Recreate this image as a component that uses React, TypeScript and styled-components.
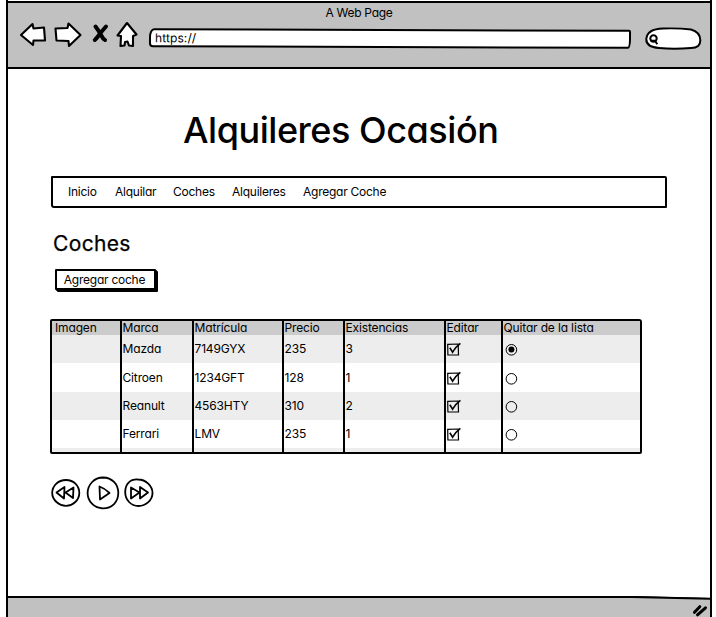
import React from 'react';
import styled, { createGlobalStyle } from 'styled-components';

const Global = createGlobalStyle`
  * { box-sizing: border-box; }
  body {
    margin: 0;
    background: #fff;
    color: #000;
    font-family: Inter, "Liberation Sans", sans-serif;
    font-feature-settings: "cv11" 1;
    overflow: hidden;
  }
`;

const Browser = styled.div`
  width: 706px;
  height: 617px;
  margin-left: 6px;
  border-left: 2px solid #000;
  border-right: 2px solid #000;
  display: flex;
  flex-direction: column;
`;

const Chrome = styled.header`
  height: 68px;
  flex: none;
  margin-top: 1px;
  background: #c1c1c1;
  border-top: 2px solid #000;
  border-bottom: 2px solid #000;
`;

const WindowTitle = styled.div`
  height: 20px;
  line-height: 20px;
  text-align: center;
  font-size: 12px;
  letter-spacing: -0.3px;
`;

const Tools = styled.div`
  display: flex;
  align-items: flex-start;
`;

const NavIcons = styled.svg`
  width: 142px;
  height: 36px;
  margin-top: -6px;
  flex: none;
  overflow: visible;
`;

const Address = styled.div`
  width: 482px;
  height: 19px;
  margin-top: 6px;
  margin-left: -1px;
  padding-left: 4px;
  background: #fff;
  border: 2px solid #000;
  border-radius: 5px 2px 3px 4px / 9px 2px 9px 4px;
  transform: rotate(0.2deg);
  font-size: 12px;
  line-height: 15px;
  letter-spacing: 0.1px;
`;

const Search = styled.svg`
  width: 58px;
  height: 24px;
  margin: 3px 0 0 14px;
  flex: none;
`;

const Page = styled.main`
  flex: 1;
  padding: 0 43px;
  display: flex;
  flex-direction: column;
  align-items: flex-start;
`;

const Title = styled.h1`
  margin: 37px 0 0 132px;
  font-size: 36px;
  line-height: 48px;
  font-weight: 500;
  letter-spacing: -0.46px;
  white-space: nowrap;
`;

const Menu = styled.nav`
  width: 616px;
  height: 32px;
  margin-top: 22px;
  padding-left: 15px;
  border: 2px solid #000;
  border-radius: 1px 2px 1px 3px;
  display: flex;
  align-items: center;
`;

const MenuItem = styled.span<{ $width: number }>`
  width: ${(p) => p.$width}px;
  font-size: 12px;
  line-height: 16px;
  letter-spacing: -0.25px;
  white-space: nowrap;
`;

const Heading = styled.h2`
  margin: 24px 0 0 2px;
  font-size: 21px;
  line-height: 24px;
  font-weight: 400;
  letter-spacing: 0.35px;
  -webkit-text-stroke: 0.25px #000;
`;

const AddButton = styled.button`
  width: 101px;
  height: 21px;
  margin: 13px 0 0 4px;
  padding: 0 2px 0 0;
  border: 2px solid #000;
  border-radius: 1px;
  background: #fff;
  box-shadow: 1px 1px 0 #000, 2px 2px 0 #000;
  color: #000;
  font: inherit;
  font-size: 12px;
  line-height: 15px;
  letter-spacing: -0.25px;
  font-feature-settings: inherit;
  white-space: nowrap;
`;

const Table = styled.div`
  width: 592px;
  height: 135px;
  margin: 29px 0 0 -1px;
  border: 2px solid #000;
  border-radius: 2px 3px 2px 2px;
  background: #ededed;
`;

const Row = styled.div<{ $bg: string; $height: number }>`
  display: grid;
  grid-template-columns: 68px 72px 90px 61px 101px 57px 1fr;
  height: ${(p) => p.$height}px;
  background: ${(p) => p.$bg};
`;

const Cell = styled.div`
  display: flex;
  align-items: center;
  padding-left: 0.5px;
  border-left: 2px solid #000;
  font-size: 12px;
  line-height: 14px;
  letter-spacing: -0.15px;
  white-space: nowrap;
  &:first-child {
    border-left: 0;
    padding-left: 3px;
  }
`;

const Mark = styled.svg`
  width: 16px;
  height: 16px;
  margin-top: 2px;
  overflow: visible;
`;

const Player = styled.svg`
  width: 104px;
  height: 34px;
  margin-top: 22px;
`;

const StatusBar = styled.footer`
  height: 21px;
  flex: none;
  border-top: 2px solid #000;
  background: #c1c1c1;
  display: flex;
  justify-content: flex-end;
`;

const Grip = styled.svg`
  width: 150px;
  height: 21px;
  margin-top: -2px;
`;

const Checkbox = () => (
  <Mark viewBox="0 0 16 16" fill="none" stroke="#000">
    <path d="M0.7 2.3 11.2 2 11.5 12.9 0.9 13Z" strokeWidth="1.2" />
    <path d="M2.8 5.8 5.6 10.2 Q8.5 5 13.4 1.4" strokeWidth="1.6" />
  </Mark>
);

const Radio = ({ on }: { on: boolean }) => (
  <Mark viewBox="0 0 16 16" fill="none" stroke="#000">
    <circle cx="7.4" cy="7.8" r="5.3" />
    {on && <circle cx="7.4" cy="7.5" r="3" fill="#000" stroke="none" />}
  </Mark>
);

const menu: [string, number][] = [
  ['Inicio', 47],
  ['Alquilar', 58],
  ['Coches', 59],
  ['Alquileres', 71],
  ['Agregar Coche', 90],
];

const headers = ['Imagen', 'Marca', 'Matrícula', 'Precio', 'Existencias', 'Editar', 'Quitar de la lista'];

const cars = [
  { brand: 'Mazda', plate: '7149GYX', price: '235', stock: '3', height: 28 },
  { brand: 'Citroen', plate: '1234GFT', price: '128', stock: '1', height: 29 },
  { brand: 'Reanult', plate: '4563HTY', price: '310', stock: '2', height: 28 },
  { brand: 'Ferrari', plate: 'LMV', price: '235', stock: '1', height: 28 },
];

export default function App() {
  return (
    <>
      <Global />
      <Browser>
        <Chrome>
          <WindowTitle>A Web Page</WindowTitle>
          <Tools>
            <NavIcons viewBox="8 17 142 36" fill="#fff" stroke="#000" strokeWidth="2.1" strokeLinejoin="round" strokeLinecap="round">
              <path d="M21 35 32.5 24 33.5 28.5 44 27.5 45 40.5 33.5 40.5 33 45Z" />
              <path d="M55.5 28.5 67.5 28 68.5 23.5 80.5 35 69 46 68.5 41 56.5 40.5Z" />
              <path d="M95.5 26.5Q99 31 101 35T105 40M106 26.5Q102 31 99 35T94.8 40" strokeWidth="4" fill="none" />
              <path d="M127 23 136.5 34.5 133 36 133 46 129 45.5 127.5 41.5 125 42 124.5 45.5 120.5 46 121 36 117.5 35.5Z" />
            </NavIcons>
            <Address>https://</Address>
            <Search viewBox="645 26 58 24" fill="#fff" stroke="#000" strokeWidth="2">
              <path d="M646.3 39Q647 29 663 28.5T691 29.5Q700 32 700.3 40T691 48Q674 49.5 659 48Q646 47 646.3 39Z" />
              <circle cx="653.5" cy="38.5" r="3.2" fill="none" />
              <path d="M650.5 40.8 655 40.8 657.3 44.3" fill="none" />
            </Search>
          </Tools>
        </Chrome>
        <Page>
          <Title>Alquileres Ocasión</Title>
          <Menu>
            {menu.map(([label, width]) => (
              <MenuItem key={label} $width={width}>{label}</MenuItem>
            ))}
          </Menu>
          <Heading>Coches</Heading>
          <AddButton>Agregar coche</AddButton>
          <Table>
            <Row $bg="#cbcbcb" $height={14}>
              {headers.map((h) => <Cell key={h}>{h}</Cell>)}
            </Row>
            {cars.map((c, i) => (
              <Row key={c.brand} $bg={i % 2 ? '#fff' : '#ededed'} $height={c.height}>
                <Cell />
                <Cell>{c.brand}</Cell>
                <Cell>{c.plate}</Cell>
                <Cell>{c.price}</Cell>
                <Cell>{c.stock}</Cell>
                <Cell><Checkbox /></Cell>
                <Cell><Radio on={i === 0} /></Cell>
              </Row>
            ))}
            <Row $bg="#ededed" $height={4}>
              {headers.map((h) => <Cell key={h} />)}
            </Row>
          </Table>
          <Player viewBox="51 476 104 34" fill="none" stroke="#000" strokeWidth="1.8" strokeLinejoin="round">
            <path d="M66 480C74 480 79.3 486 79.3 493S73 505.8 66 505.8 52.2 500 52.2 493 58 480 66 480Z" />
            <path d="M56.5 492.5 64.5 487 64 498.5ZM65.5 492.5 73.5 487.5 73 498Z" />
            <path d="M103 477.5C112 477.7 118.3 484 118.3 493S112 508.3 103 508.3 87.6 501 87.6 493 94 477.5 103 477.5Z" />
            <path d="M99.5 486.5Q105 488.5 109.5 493L100 499.5Z" />
            <path d="M138 479.5C146 479.5 152.5 486 152.5 493S146 506 138.5 506 125.2 500 125.2 492 130 479 138 479.5Z" />
            <path d="M131 487.5 139.5 492.5 131 498.5ZM140 487 148 492.5 140 498.5Z" />
          </Player>
        </Page>
        <StatusBar>
          <Grip viewBox="560 596 150 21">
            <path d="M632 596H710V598Z" fill="#fff" />
            <path d="M560 596H632L710 597.7V599.7L632 598H560Z" />
            <path d="M694.5 612.3 699.8 606.7M697.5 614.8 705.5 607.8" fill="none" stroke="#000" strokeWidth="3" strokeLinecap="round" />
          </Grip>
        </StatusBar>
      </Browser>
    </>
  );
}
